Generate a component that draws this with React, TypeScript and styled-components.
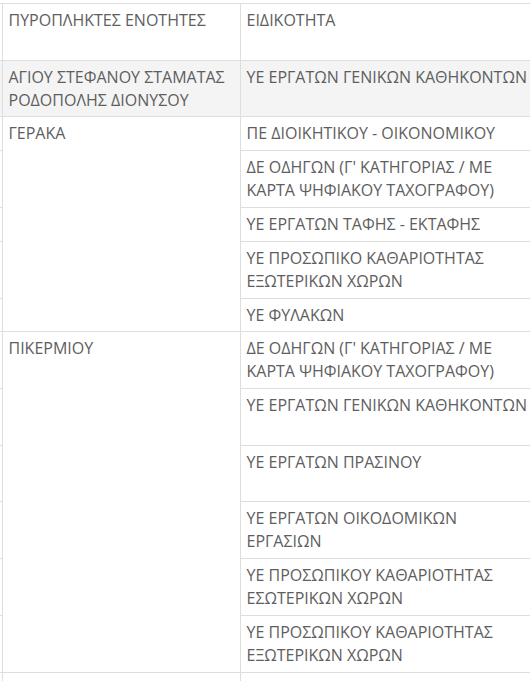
import React from "react";
import styled, { createGlobalStyle } from "styled-components";

const Global = createGlobalStyle`
  html, body { margin: 0; padding: 0; background: #fff; overflow: hidden; }
  body { font-family: "Open Sans", "Noto Sans", "DejaVu Sans", sans-serif; }
`;

const Page = styled.div`
  width: 530px;
  height: 681px;
  overflow: hidden;
  padding-top: 3px;
  box-sizing: border-box;
`;

const Table = styled.table`
  border-collapse: collapse;
  table-layout: fixed;
  width: 540px;
  font-size: 16px;
  line-height: 1.42857143;
  color: #5e5e5e;
`;

const Col = styled.col<{ $w: number }>`
  width: ${(p) => p.$w}px;
`;

const Row = styled.tr<{ $shade?: boolean }>`
  background: ${(p) => (p.$shade ? "#f4f4f4" : "#fff")};
`;

const Stub = styled.td`
  padding: 0;
  border-top: 1px solid #dedede;
  border-bottom: 1px solid #dedede;
  border-right: 1px solid #dedede;
`;

const Cell = styled.td`
  padding: 5px 6px;
  border: 1px solid #dedede;
  vertical-align: top;
  text-align: left;
  font-weight: 400;
`;

const HeadCell = styled(Cell).attrs({ as: "th" })``;

const Content = styled.div<{ $lines: number }>`
  min-height: ${(p) => p.$lines * 1.42857143}em;
  white-space: nowrap;
`;

const Line = styled.span`
  display: block;
`;

type Item = { lines: string[]; min?: number };
type Group = { name: string[]; items: Item[]; shade?: boolean };

const groups: Group[] = [
  {
    name: ["ΑΓΙΟΥ ΣΤΕΦΑΝΟΥ ΣΤΑΜΑΤΑΣ", "ΡΟΔΟΠΟΛΗΣ ΔΙΟΝΥΣΟΥ"],
    shade: true,
    items: [{ lines: ["ΥΕ ΕΡΓΑΤΩΝ ΓΕΝΙΚΩΝ ΚΑΘΗΚΟΝΤΩΝ"] }],
  },
  {
    name: ["ΓΕΡΑΚΑ"],
    items: [
      { lines: ["ΠΕ ΔΙΟΙΚΗΤΙΚΟΥ - ΟΙΚΟΝΟΜΙΚΟΥ"] },
      { lines: ["ΔΕ ΟΔΗΓΩΝ (Γ' ΚΑΤΗΓΟΡΙΑΣ / ΜΕ", "ΚΑΡΤΑ ΨΗΦΙΑΚΟΥ ΤΑΧΟΓΡΑΦΟΥ)"] },
      { lines: ["ΥΕ ΕΡΓΑΤΩΝ ΤΑΦΗΣ - ΕΚΤΑΦΗΣ"] },
      { lines: ["ΥΕ ΠΡΟΣΩΠΙΚΟ ΚΑΘΑΡΙΟΤΗΤΑΣ", "ΕΞΩΤΕΡΙΚΩΝ ΧΩΡΩΝ"] },
      { lines: ["ΥΕ ΦΥΛΑΚΩΝ"] },
    ],
  },
  {
    name: ["ΠΙΚΕΡΜΙΟΥ"],
    items: [
      { lines: ["ΔΕ ΟΔΗΓΩΝ (Γ' ΚΑΤΗΓΟΡΙΑΣ / ΜΕ", "ΚΑΡΤΑ ΨΗΦΙΑΚΟΥ ΤΑΧΟΓΡΑΦΟΥ)"] },
      { lines: ["ΥΕ ΕΡΓΑΤΩΝ ΓΕΝΙΚΩΝ ΚΑΘΗΚΟΝΤΩΝ"], min: 2 },
      { lines: ["ΥΕ ΕΡΓΑΤΩΝ ΠΡΑΣΙΝΟΥ"], min: 2 },
      { lines: ["ΥΕ ΕΡΓΑΤΩΝ ΟΙΚΟΔΟΜΙΚΩΝ", "ΕΡΓΑΣΙΩΝ"] },
      { lines: ["ΥΕ ΠΡΟΣΩΠΙΚΟΥ ΚΑΘΑΡΙΟΤΗΤΑΣ", "ΕΣΩΤΕΡΙΚΩΝ ΧΩΡΩΝ"] },
      { lines: ["ΥΕ ΠΡΟΣΩΠΙΚΟΥ ΚΑΘΑΡΙΟΤΗΤΑΣ", "ΕΞΩΤΕΡΙΚΩΝ ΧΩΡΩΝ"] },
    ],
  },
  {
    name: [],
    items: [{ lines: [], min: 2 }],
  },
];

const Text: React.FC<{ lines: string[]; min?: number }> = ({ lines, min = 1 }) => (
  <Content $lines={Math.max(min, lines.length)}>
    {lines.map((l) => (
      <Line key={l}>{l}</Line>
    ))}
  </Content>
);

export default function App() {
  return (
    <>
      <Global />
      <Page>
        <Table>
          <colgroup>
            <Col $w={2} />
            <Col $w={238} />
            <Col $w={300} />
          </colgroup>
          <thead>
            <Row>
              <Stub />
              <HeadCell>
                <Text lines={["ΠΥΡΟΠΛΗΚΤΕΣ ΕΝΟΤΗΤΕΣ"]} min={2} />
              </HeadCell>
              <HeadCell>
                <Text lines={["ΕΙΔΙΚΟΤΗΤΑ"]} min={2} />
              </HeadCell>
            </Row>
          </thead>
          <tbody>
            {groups.map((g, gi) =>
              g.items.map((it, i) => (
                <Row key={`${gi}-${i}`} $shade={g.shade}>
                  <Stub />
                  {i === 0 && (
                    <Cell rowSpan={g.items.length}>
                      <Text lines={g.name} />
                    </Cell>
                  )}
                  <Cell>
                    <Text lines={it.lines} min={it.min} />
                  </Cell>
                </Row>
              ))
            )}
          </tbody>
        </Table>
      </Page>
    </>
  );
}
